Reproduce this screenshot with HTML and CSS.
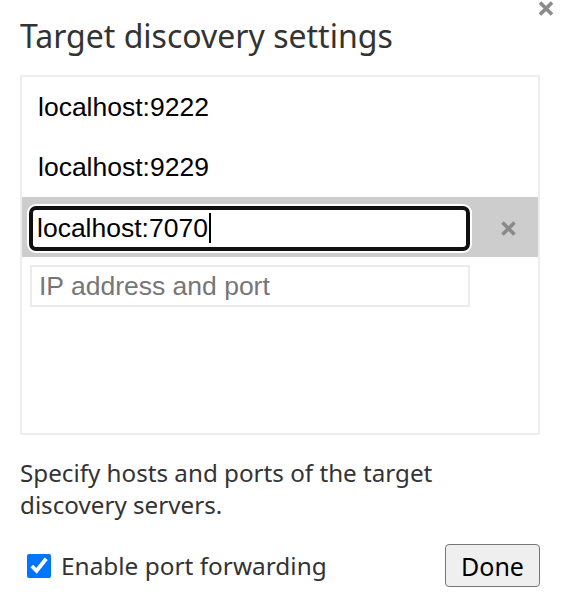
FILE: index.html
```html
<!DOCTYPE html>
<html>
<head>
<meta charset="utf-8">
<link rel="stylesheet" href="styles.css">
</head>
<body>
<div class="dialog">
  <button class="close" aria-label="Close">
    <svg width="18" height="17" viewBox="0 0 18 17"><path d="M3 2.5 L15 14.5 M15 2.5 L3 14.5" stroke="#8a8a8a" stroke-width="3.6" stroke-linecap="butt"/></svg>
  </button>
  <h1 class="title">Target discovery settings</h1>
  <div class="list">
    <div class="row"><span class="host">localhost:9222</span></div>
    <div class="row"><span class="host">localhost:9229</span></div>
    <div class="row selected">
      <div class="edit focused"><span>localhost:7070</span><span class="caret"></span></div>
      <span class="remove">
        <svg width="17" height="17" viewBox="0 0 17 17"><path d="M2.5 2.5 L14.5 14.5 M14.5 2.5 L2.5 14.5" stroke="#8a8a8a" stroke-width="3.6"/></svg>
      </span>
    </div>
    <div class="row new">
      <div class="edit placeholder">IP address and port</div>
    </div>
  </div>
  <p class="desc">Specify hosts and ports of the target discovery servers.</p>
  <div class="footer">
    <label class="check"><input type="checkbox" checked><span>Enable port forwarding</span></label>
    <button class="done">Done</button>
  </div>
</div>
</body>
</html>
```
FILE: styles.css
```css
html, body {
  margin: 0;
  padding: 0;
  background: #fff;
}
.dialog {
  position: relative;
  width: 562px;
  height: 604px;
  box-sizing: border-box;
  padding: 16px 22px 0 20px;
  font-family: "Noto Sans", sans-serif;
  color: #333;
}
.close {
  position: absolute;
  top: 0;
  right: 7px;
  padding: 0;
  border: 0;
  background: none;
  width: 18px;
  height: 17px;
  display: flex;
}
.title {
  margin: 0;
  font-size: 32px;
  font-weight: normal;
  line-height: 40px;
  color: #333;
}
.list {
  margin-top: 19px;
  height: 360px;
  box-sizing: border-box;
  border: 2px solid #eeeeee;
  display: flex;
  flex-direction: column;
  font-family: "Liberation Sans", Arial, sans-serif;
  font-size: 26.5px;
  color: #000;
}
.row {
  height: 60px;
  flex: none;
  display: flex;
  align-items: center;
  padding-left: 16px;
}
.row.selected {
  background: #cdcdcd;
  padding-left: 7px;
}
.row.new {
  padding-left: 8px;
}
.edit {
  box-sizing: border-box;
  width: 440px;
  height: 42px;
  display: flex;
  align-items: center;
  background: #fff;
}
.edit.focused {
  width: 441px;
  height: 45px;
  border: 4px solid #101010;
  border-radius: 7px;
  box-shadow: 0 0 0 2px #fff;
  padding-left: 4px;
  margin-top: 2px;
}
.caret {
  display: inline-block;
  width: 2px;
  height: 30px;
  background: #000;
  margin-left: 1px;
}
.edit.placeholder {
  border: 2px solid #ebebeb;
  height: 42px;
  padding-left: 7px;
  color: #767676;
  margin-top: -2px;
}
.remove {
  display: flex;
  width: 17px;
  height: 17px;
  margin-left: 30px;
  margin-top: 2px;
}
.desc {
  margin: 22px 0 0 0;
  font-size: 24.2px;
  line-height: 32px;
  width: 450px;
  color: #333;
}
.footer {
  margin-top: 23px;
  display: flex;
  align-items: center;
  justify-content: space-between;
}
.check {
  display: flex;
  align-items: center;
  font-size: 24.4px;
  color: #333;
  margin-left: 7px;
}
.check input {
  width: 24px;
  height: 24px;
  margin: 0 10px 0 0;
}
.done {
  width: 95px;
  height: 43px;
  font-family: "Noto Sans", sans-serif;
  font-size: 25px;
  color: #000;
  background: #efefef;
  border: 1px solid #767676;
  border-radius: 4px;
  padding: 0;
}
```
